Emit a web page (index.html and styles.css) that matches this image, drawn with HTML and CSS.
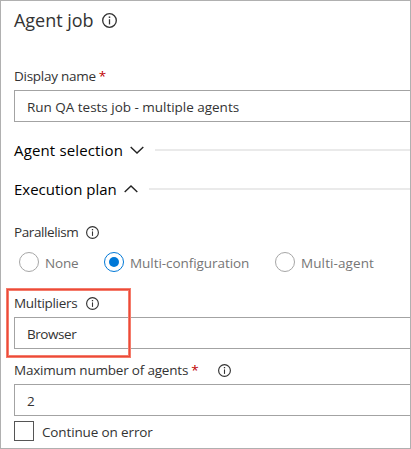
FILE: index.html
```html
<!DOCTYPE html>
<html lang="en">
<head>
<meta charset="utf-8">
<title>Agent job</title>
<link rel="stylesheet" href="styles.css">
</head>
<body>
<svg class="defs" aria-hidden="true">
  <symbol id="info" viewBox="0 0 13 13"><circle cx="6.5" cy="6.5" r="5.9" fill="none" stroke="currentColor" stroke-width="1.15"/><path d="M6.5 5.4v4.5" stroke="currentColor" stroke-width="1.1"/><path d="M6.5 3v1.3" stroke="currentColor" stroke-width="1.3"/></symbol>
</svg>
<main class="panel">
  <h1 class="title"><span class="t-title">Agent job</span><svg class="info info-large"><use href="#info"/></svg></h1>
  <label class="label"><span class="t-display">Display name</span><span class="required">*</span></label>
  <div class="input"><span class="t-run">Run QA tests job - multiple agents</span></div>
  <div class="section section-first"><span class="t-selection">Agent selection</span><svg class="chevron" viewBox="0 0 14 8"><path d="M.7 1l6.3 6 6.3-6"/></svg><span class="rule"></span></div>
  <div class="section"><span class="t-plan">Execution plan</span><svg class="chevron" viewBox="0 0 14 8"><path d="M.7 7L7 1l6.3 6"/></svg><span class="rule"></span></div>
  <div class="label label-parallel"><span class="t-parallel">Parallelism</span><svg class="info"><use href="#info"/></svg></div>
  <div class="radios">
    <div class="radio radio-none"><span class="circle"></span><span class="t-none">None</span></div>
    <div class="radio radio-config"><span class="circle selected"></span><span class="t-config">Multi-configuration</span></div>
    <div class="radio"><span class="circle"></span><span class="t-agent">Multi-agent</span></div>
  </div>
  <div class="multipliers">
    <div class="label label-multi"><span class="t-multi">Multipliers</span><svg class="info"><use href="#info"/></svg></div>
    <div class="input"><span class="t-browser">Browser</span></div>
    <span class="highlight"></span>
  </div>
  <div class="label label-max"><span class="t-max">Maximum number of agents</span><span class="required">*</span><svg class="info info-far"><use href="#info"/></svg></div>
  <div class="input"><span>2</span></div>
  <div class="check"><span class="box"></span><span class="t-continue">Continue on error</span></div>
</main>
</body>
</html>
```
FILE: styles.css
```css
* { box-sizing: border-box; }
body {
  margin: 0;
  background: #fff;
  color: #333;
  font: 13.5px/20px "Segoe UI", "Open Sans", "Noto Sans", sans-serif;
  white-space: nowrap;
}
.defs { position: absolute; width: 0; height: 0; }
.panel {
  width: 411px;
  height: 449px;
  border: 1px solid #b0b0b0;
  padding-left: 13px;
  overflow: hidden;
}
.title {
  display: flex;
  align-items: center;
  height: 37px;
  margin: 0 0 28px;
  font-size: 18px;
  font-weight: 400;
}
.title span { width: 88px; letter-spacing: -.04px; }
.info { flex: none; width: 13px; height: 13px; color: #333; }
.info-large { width: 15px; height: 15px; margin-top: 1px; }
.label { display: flex; align-items: center; height: 20px; }
.label .info { margin-top: 1px; }
.required { color: #c00000; margin-left: 3px; }
.input {
  display: flex;
  align-items: center;
  height: 32px;
  padding: 2px 0 0 12px;
  border: 1px solid #a3a3a3;
  border-right: 0;
}
.label + .input { margin-top: 4px; }
.section { display: flex; align-items: center; height: 39px; color: #000; font-size: 15px; }
.section-first { margin-top: 8px; }
.chevron { width: 14px; height: 8px; margin-left: 7px; fill: none; stroke: #222; stroke-width: 1.4; }
.rule { flex: 1; height: 2px; margin-left: 11px; background: #eaeaea; }
.label-parallel { margin-top: 14px; }
.t-display { letter-spacing: -.27px; }
.t-run { letter-spacing: -.02px; }
.t-selection { letter-spacing: .15px; }
.t-parallel, .t-multi { width: 72px; letter-spacing: -.4px; }
.t-multi { letter-spacing: -.3px; }
.t-none { letter-spacing: -.2px; }
.t-config { letter-spacing: -.06px; }
.t-agent { letter-spacing: .1px; }
.t-browser { letter-spacing: -.45px; }
.t-max { letter-spacing: -.2px; }
.t-continue { letter-spacing: -.13px; }
.radios { display: flex; height: 20px; margin: 10px 0 0 5px; color: #767676; }
.radio { display: flex; align-items: center; gap: 6px; }
.radio > span:last-child { padding-top: 2px; }
.radio-none { width: 85px; }
.radio-config { width: 171px; }
.circle { flex: none; width: 20px; height: 20px; border: 1px solid #a6a6a6; border-radius: 50%; }
.circle.selected { border-color: #0078d7; padding: 4px; }
.circle.selected::after { content: ""; display: block; width: 10px; height: 10px; border-radius: 50%; background: #0078d7; }
.multipliers { position: relative; margin-top: 21px; }
.highlight {
  position: absolute;
  left: -7px;
  top: -4px;
  width: 123px;
  height: 68px;
  border: 1px solid #ec4a38;
  box-shadow: 0 0 0 1px #f47c6c, inset 0 0 0 1px #f47c6c;
}
.label-max { margin-top: 11px; }
.info-far { margin-left: 19px; }
.check { display: flex; align-items: center; gap: 8px; height: 20px; margin-top: 5px; }
.check > span:last-child { padding-top: 2px; }
.box { width: 20px; height: 20px; border: 1px solid #555; }
```
